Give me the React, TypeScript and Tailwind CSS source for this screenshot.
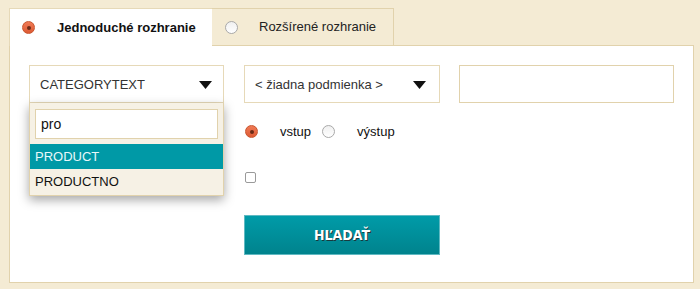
import React from "react";

const Radio = ({ checked }: { checked?: boolean }) =>
  checked ? (
    <span className="flex h-[13px] w-[13px] shrink-0 items-center justify-center rounded-full border border-[#c8552e] bg-gradient-to-b from-[#f07a55] to-[#dd5a33]">
      <span className="h-[4px] w-[4px] rounded-full bg-[#6b2a16]" />
    </span>
  ) : (
    <span className="block h-[13px] w-[13px] shrink-0 rounded-full border border-[#a9a9a9] bg-gradient-to-b from-[#f0f0f0] to-white" />
  );

const Arrow = () => (
  <svg width="13" height="8" viewBox="0 0 13 8">
    <path d="M0 0H13L6.5 8Z" fill="#111" />
  </svg>
);

const App = () => {
  return (
    <div
      className="h-[289px] w-[700px] bg-[#f4ebd4] pl-[9px] pt-[8px] text-[13px] text-[#222]"
      style={{ fontFamily: '"Liberation Sans", Arial, sans-serif' }}
    >
      <div className="flex h-[37px]">
        <div className="relative z-10 flex h-[38px] w-[203px] items-center gap-[22px] border-l border-t border-[#e6d9b8] bg-white pl-[12px]">
          <Radio checked />
          <span className="font-bold text-[#111]">Jednoduché rozhranie</span>
        </div>
        <div className="flex h-[37px] w-[182px] items-center gap-[21px] border-r border-t border-[#e1d2ac] bg-[#f4ebd4] pl-[13px]">
          <Radio />
          <span className="text-[#222]">Rozšírené rozhranie</span>
        </div>
      </div>
      <div className="h-[238px] w-[685px] border border-[#e1d2ac] bg-white pl-[19px] pt-[19px]">
        <div className="flex items-start">
          <div className="relative w-[195px]">
            <div className="flex h-[38px] items-center justify-between border border-[#e6d9b8] pl-[10px] pr-[11px] pt-[1px] text-[#333]">
              <span>CATEGORYTEXT</span>
              <Arrow />
            </div>
            <div className="absolute left-0 top-[38px] z-20 w-[195px] border border-t-0 border-[#e1d2ac] bg-[#f6f1e5] shadow-[0_4px_10px_rgba(0,0,0,0.35)]">
              <div className="px-[5px] pb-[5px] pt-[6px]">
                <div className="flex h-[30px] items-center border border-[#e1d2ac] bg-white pl-[5px] text-[14px] text-[#111]">
                  pro
                </div>
              </div>
              <div className="flex h-[25px] items-center bg-[#0099a6] pl-[5px] text-[#e8f8fa]">
                PRODUCT
              </div>
              <div className="flex h-[26px] items-center pl-[5px] text-[#111]">
                PRODUCTNO
              </div>
            </div>
          </div>
          <div className="ml-[20px] flex w-[196px] flex-col">
            <div className="flex h-[38px] items-center justify-between border border-[#e6d9b8] pl-[10px] pr-[13px] pt-[1px] text-[#333]">
              <span>&lt; žiadna podmienka &gt;</span>
              <Arrow />
            </div>
            <div className="ml-[1px] mt-[22px] flex h-[13px] items-center text-[#111]">
              <Radio checked />
              <span className="ml-[22px]">vstup</span>
              <span className="ml-[11px]">
                <Radio />
              </span>
              <span className="ml-[22px]">výstup</span>
            </div>
            <span className="ml-[1px] mt-[34px] h-[11px] w-[11px] rounded-[2px] border border-[#9a9a9a] bg-white" />
            <button
              className="mt-[32px] flex h-[40px] w-[196px] items-center justify-center border border-[#5fb9c2] bg-gradient-to-b from-[#009ba8] to-[#00838d] text-[14px] font-bold text-white [text-shadow:1px_1px_0_#1a3a3e]"
              style={{ fontFamily: '"DejaVu Sans Condensed", "DejaVu Sans", sans-serif' }}
            >
              HĽADAŤ
            </button>
          </div>
          <div className="ml-[19px] h-[38px] w-[215px] border border-[#e1d2ac] bg-white" />
        </div>
      </div>
    </div>
  );
};

export default App;
